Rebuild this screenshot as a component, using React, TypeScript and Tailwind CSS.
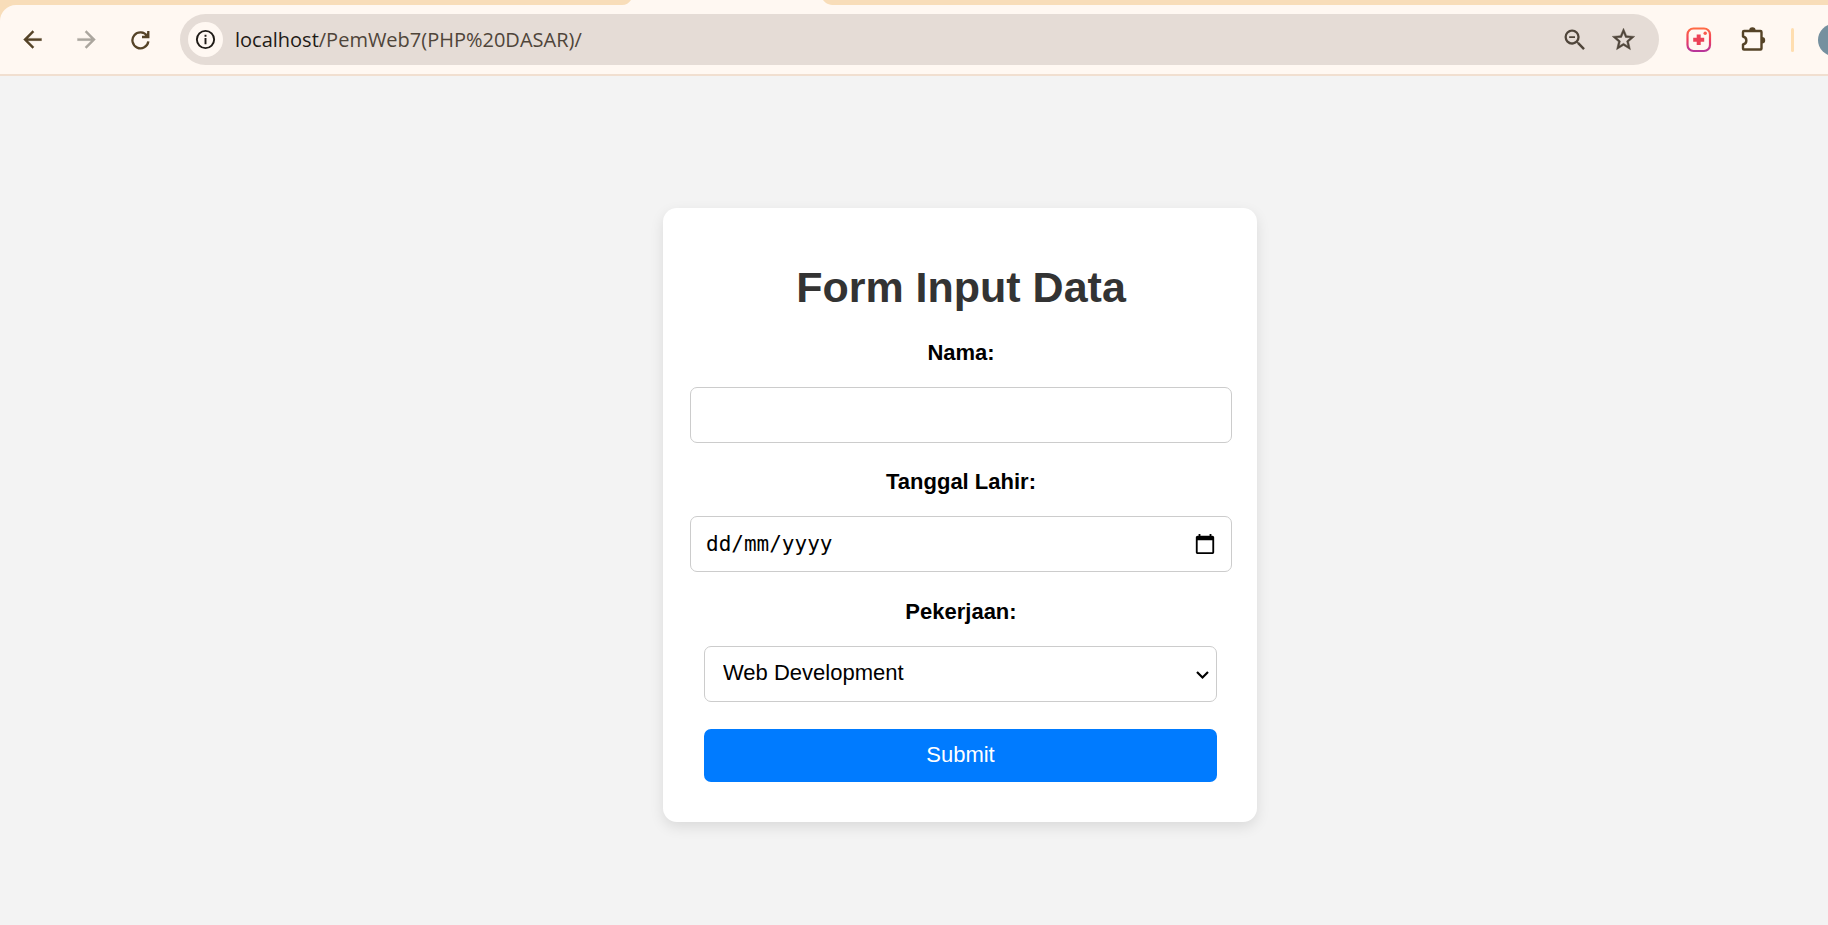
import React from 'react';

const iconButton = 'flex size-9 shrink-0 items-center justify-center rounded-full';

function Toolbar() {
  return (
    <header className="border-b-2 border-[#f1dfd0] bg-[#f8ddb9] pt-[5px]">
      <div className="relative flex h-[69px] items-center rounded-tl-2xl bg-[#fff8f2] pl-[14px]">
        <svg className="absolute -top-[5px] left-[622px]" width="212" height="5" viewBox="0 0 212 5" aria-hidden="true">
          <path d="M0 5C4 5 7 3 9 0H201C203 3 207 5 212 5Z" fill="#fff8f2" />
        </svg>
        <nav className="flex shrink-0 gap-[18px]" aria-label="Navigation">
          <button className={iconButton} aria-label="Back">
            <svg width="27" height="27" viewBox="0 0 24 24" fill="#554327" stroke="#554327" strokeWidth="0.3">
              <path d="M20 11H7.83l5.59-5.59L12 4l-8 8 8 8 1.41-1.41L7.83 13H20v-2z" />
            </svg>
          </button>
          <button className={iconButton} aria-label="Forward">
            <svg width="27" height="27" viewBox="0 0 24 24" fill="#aba69e" stroke="#aba69e" strokeWidth="0.3">
              <path d="M4 13h12.17l-5.59 5.59L12 20l8-8-8-8-1.41 1.41L16.17 11H4v2z" />
            </svg>
          </button>
          <button className={iconButton} aria-label="Reload">
            <svg width="20" height="20" viewBox="0 0 20 20" fill="none" stroke="#554327" strokeWidth="2.3">
              <path d="M17.100 5.900A8 8 0 1 0 18.350 11.400" />
              <path d="M18.300 1V7H12" />
              <path d="M18.500 2v5h-5z" fill="#554327" stroke="none" />
            </svg>
          </button>
        </nav>
        <div className="ml-[22px] flex h-[51px] min-w-0 flex-1 items-center rounded-full bg-[#e5dcd6] pl-2 pr-[18px]">
          <button className="flex size-[35px] shrink-0 items-center justify-center rounded-full bg-[#fff8f2]" aria-label="Site information">
            <svg width="23" height="23" viewBox="0 0 24 24" fill="#1f1b16">
              <path d="M11 10.500h2v6.500h-2zM11 7h2v2h-2zM12 2a10 10 0 1 0 0 20 10 10 0 0 0 0-20zm0 18a8 8 0 1 1 0-16 8 8 0 0 1 0 16z" />
            </svg>
          </button>
          <p className="ml-3 flex-1 truncate font-['Open_Sans',sans-serif] text-[20px] leading-7 text-[#4f453a]">
            <span className="text-[#1f1b16]">localhost</span>/PemWeb7(PHP%20DASAR)/
          </p>
          <div className="flex gap-3">
            <button className={iconButton} aria-label="Zoom">
              <svg width="28" height="28" viewBox="0 0 24 24" fill="#4f453a">
                <path d="M15.500 14h-.79l-.28-.27A6.470 6.470 0 0 0 16 9.500 6.500 6.500 0 1 0 9.500 16c1.610 0 3.090-.59 4.230-1.570l.27.28v.79l5 4.990L20.490 19l-4.990-5zm-6 0C7.010 14 5 11.990 5 9.500S7.010 5 9.500 5 14 7.010 14 9.500 11.990 14 9.500 14zM7 8.700h5v1.600H7z" />
              </svg>
            </button>
            <button className={iconButton} aria-label="Bookmark">
              <svg width="27" height="27" viewBox="0 0 24 24" fill="#4f453a" stroke="#4f453a" strokeWidth="0.4">
                <path d="M22 9.240l-7.190-.62L12 2 9.190 8.630 2 9.240l5.460 4.730L5.820 21 12 17.270 18.180 21l-1.630-7.030L22 9.240zM12 15.400l-3.760 2.270 1-4.280-3.320-2.880 4.380-.38L12 6.100l1.710 4.040 4.380.38-3.320 2.880 1 4.280L12 15.400z" />
              </svg>
            </button>
          </div>
        </div>
        <div className="flex w-[169px] shrink-0 items-center overflow-hidden pl-[22px]">
          <button className={iconButton} aria-label="Extension">
            <svg width="26" height="26" viewBox="0 0 26 26" fill="none">
              <defs>
                <linearGradient id="ring" x1="0" y1="0" x2="0" y2="1">
                  <stop offset="0" stopColor="#ff6a45" />
                  <stop offset="0.5" stopColor="#f03f5c" />
                  <stop offset="1" stopColor="#b8359a" />
                </linearGradient>
              </defs>
              <rect x="1.500" y="1.500" width="22.500" height="22.500" rx="6" stroke="url(#ring)" strokeWidth="2.200" />
              <path d="M10.700 7.500h4v3.300h3.500v4h-3.500v3.300h-4v-3.300H7.200v-4h3.500z" fill="#ec4257" />
              <circle cx="19.200" cy="6.300" r="1.700" fill="#fb5a4c" />
            </svg>
          </button>
          <button className={iconButton + ' ml-[18px]'} aria-label="Extensions">
            <svg width="26" height="26" viewBox="0 0 26 26" fill="none">
              <path
                d="M4 4H20.500Q21.500 4 21.500 5V21.500Q21.500 22.500 20.500 22.500H4Q3 22.500 3 21.500V17.500C7.500 16.500 7.500 10.500 3 9.500V5Q3 4 4 4Z"
                stroke="#554327"
                strokeWidth="2.400"
                strokeLinejoin="round"
              />
              <path d="M9.200 3.500a3.200 3.200 0 0 1 6.400 0zM22 10a3.200 3.200 0 0 1 0 6.400z" fill="#554327" />
            </svg>
          </button>
          <span className="ml-5 h-6 w-[3px] shrink-0 rounded-full bg-[#ffdeb0]" />
          <button className="ml-6 size-8 shrink-0 rounded-full bg-[#75909f]" aria-label="Profile" />
        </div>
      </div>
    </header>
  );
}

const label = 'block text-center text-[22px] font-bold leading-6';
const wideField =
  'block h-14 w-full rounded-[7px] border border-[#ccc] bg-white px-[15px] outline-none';

export default function App() {
  return (
    <div className="flex min-h-screen flex-col bg-[#f3f3f3] font-['Liberation_Sans',Arial,sans-serif] text-black">
      <Toolbar />
      <main className="flex flex-1 items-center justify-center pb-8 pl-[92px] pt-[60px]">
        <form
          className="w-full max-w-[594px] rounded-[14px] bg-white pb-10 pl-[27px] pr-[25px] pt-[53px] shadow-[0_5px_14px_rgba(0,0,0,0.1)]"
          onSubmit={(e) => e.preventDefault()}
        >
          <h1 className="text-center text-[43px] font-bold leading-[52px] text-[#333]">Form Input Data</h1>

          <label htmlFor="nama" className={label + ' mt-7'}>Nama:</label>
          <input id="nama" type="text" className={wideField + ' mt-[22px] text-[22px]'} />

          <label htmlFor="tanggal" className={label + ' mt-[27px]'}>Tanggal Lahir:</label>
          <div className="relative mt-[22px]">
            <input
              id="tanggal"
              type="text"
              placeholder="dd/mm/yyyy"
              className={wideField + " font-['DejaVu_Sans_Mono',monospace] text-[21px] placeholder:text-black placeholder:opacity-100"}
            />
            <button type="button" aria-label="Open calendar" className="absolute inset-y-0 right-4 flex items-center">
              <svg width="22" height="22" viewBox="0 0 24 24" fill="#000">
                <path d="M20 3h-1V1h-2v2H7V1H5v2H4c-1.100 0-2 .9-2 2v16c0 1.100.9 2 2 2h16c1.100 0 2-.9 2-2V5c0-1.100-.9-2-2-2zm0 18H4V8h16v13z" />
              </svg>
            </button>
          </div>

          <label htmlFor="pekerjaan" className={label + ' mt-7'}>Pekerjaan:</label>
          <div className="relative ml-[14px] mr-[15px] mt-[22px]">
            <select
              id="pekerjaan"
              className="block h-14 w-full appearance-none rounded-[7px] border border-[#ccc] bg-white px-[18px] pb-[2px] text-[22px] outline-none"
            >
              <option>Web Development</option>
            </select>
            <svg className="pointer-events-none absolute right-2 top-[23px]" width="13" height="12" viewBox="0 0 13 12" fill="none" aria-hidden="true">
              <path d="M1 3l5.500 5.500L12 3" stroke="#000" strokeWidth="2.200" />
            </svg>
          </div>

          <div className="ml-[14px] mr-[15px] mt-[27px]">
            <button type="submit" className="block h-[53px] w-full rounded-[7px] bg-[#007bff] pb-[2px] text-[22px] text-white">
              Submit
            </button>
          </div>
        </form>
      </main>
    </div>
  );
}
